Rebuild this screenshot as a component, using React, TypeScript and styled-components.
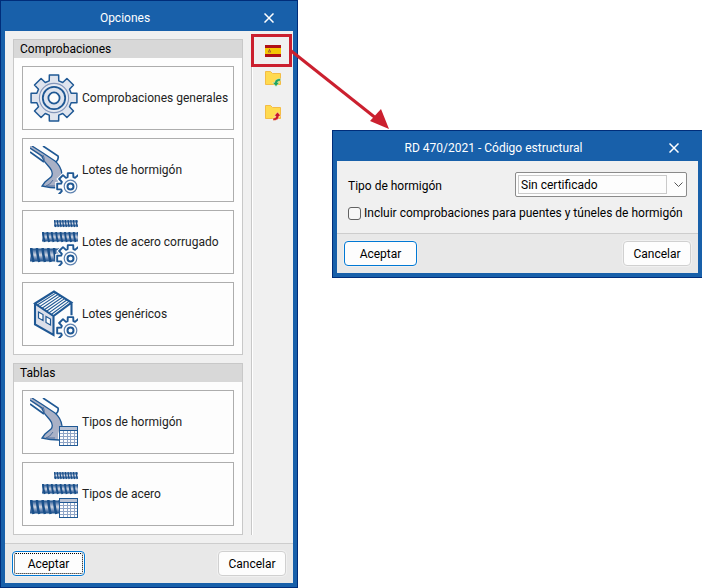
import React from "react";
import styled, { createGlobalStyle } from "styled-components";

const GlobalStyle = createGlobalStyle`
  *, *::before, *::after { box-sizing: border-box; }
  body { margin: 0; background: #fff; }
  body, button, select, input {
    font-family: Roboto, "Noto Sans", sans-serif;
    font-size: 12px;
    line-height: 16px;
    color: #000;
  }
`;

const Desktop = styled.main`
  display: grid;
  grid-template-columns: 298fr 370fr;
  column-gap: 34px;
  align-items: start;
`;

const Window = styled.section<{ $offset?: number; $flush?: boolean }>`
  min-width: 0;
  margin-top: ${(p) => p.$offset ?? 0}px;
  padding: 0 4px 4px;
  background: #1860aa;
  border: 1px solid #002d7a;
  border-right-width: ${(p) => (p.$flush ? 0 : 1)}px;
`;

const TitleBar = styled.header`
  display: flex;
  align-items: center;
  height: 30px;
  padding-top: 4px;
`;

const Title = styled.h1`
  flex: 1;
  margin: 0;
  font-size: 12px;
  font-weight: 400;
  text-align: center;
  color: #fff;
`;

const CloseButton = styled.button`
  display: grid;
  place-items: center;
  width: 48px;
  height: 26px;
  padding: 0;
  border: 0;
  background: none;
`;

const OptionsBody = styled.div`
  display: flex;
  gap: 8px;
  padding: 8px 0 8px 8px;
  background: #f0f0f0;
`;

const Groups = styled.div`
  flex: 1;
  min-width: 0;
  display: flex;
  flex-direction: column;
  gap: 8px;
`;

const GroupBox = styled.section`
  border: 1px solid #c8c8c8;
  background: #fdfdfd;
`;

const GroupTitle = styled.h2`
  margin: 0;
  padding: 1px 6px;
  font-size: 12px;
  font-weight: 400;
  background: #d8d8d8;
`;

const OptionList = styled.div`
  display: grid;
  grid-template-columns: minmax(0, 1fr);
  gap: 8px;
  padding: 8px;
`;

const OptionButton = styled.button`
  display: flex;
  align-items: center;
  gap: 4px;
  height: 64px;
  padding: 0 0 0 7px;
  border: 1px solid #adadad;
  background: #fdfdfd;
  color: #222;
  text-align: left;
  white-space: nowrap;

  svg { flex: none; }
`;

const Toolbar = styled.div`
  display: flex;
  flex-direction: column;
  align-items: stretch;
  width: 42px;
  border-left: 1px solid #c8c8c8;
  box-shadow: inset 1px 0 #fff;
`;

const ToolSeparator = styled.hr`
  align-self: stretch;
  height: 1px;
  margin: 1px 4px 2px 1px;
  border: 0;
  background: #d4d4d4;
`;

const ToolButton = styled.button<{ $gap?: number }>`
  position: relative;
  display: grid;
  place-items: center;
  height: 24px;
  margin-top: ${(p) => p.$gap ?? 0}px;
  padding: 0;
  border: 0;
  background: none;
`;

const Callout = styled.span`
  position: absolute;
  top: -5px;
  left: -1px;
  right: 1px;
  height: 33px;
  border: 3px solid #cb202f;
  pointer-events: none;
`;

const CalloutArrow = styled.svg`
  position: absolute;
  top: 10px;
  left: 36px;
  z-index: 2;
  overflow: visible;
`;

const Footer = styled.footer`
  display: flex;
  justify-content: space-between;
  padding: 7px;
  border-top: 1px solid #cdcdcd;
  background: #e8e8e8;
`;

const DialogButton = styled.button<{ $primary?: boolean; $focused?: boolean }>`
  min-width: ${(p) => (p.$primary ? 73 : 68)}px;
  height: 25px;
  padding: 0 4px;
  border: 1px solid ${(p) => (p.$primary ? "#0078d4" : "#d0d0d0")};
  border-radius: 4px;
  background: #fdfdfd;
  box-shadow: 0 0 0 1px #f0f0f0;
  outline: ${(p) => (p.$focused ? "1px dotted #000" : "none")};
  outline-offset: -3px;
`;

const Form = styled.form`
  display: grid;
  gap: 8px;
  padding: 11px 11px 12px;
  background: #f0f0f0;
`;

const FieldRow = styled.div`
  display: flex;
  align-items: center;
  justify-content: space-between;

  label { padding-top: 2px; }
`;

const SelectFrame = styled.div`
  display: grid;
  grid-template-columns: 1fr 16px;
  align-items: center;
  width: 172px;
  height: 25px;
  padding: 2px 0 2px 2px;
  border: 1px solid #8a8a8a;
  border-radius: 2px;
  background: #fdfdfd;

  svg {
    grid-area: 1 / 2;
    justify-self: center;
    pointer-events: none;
  }
  &::before {
    content: "";
    grid-area: 1 / 1;
    height: 19px;
    margin-right: 3px;
    border: 1px solid #cacaca;
  }
`;

const Select = styled.select`
  grid-area: 1 / 1 / 2 / 3;
  height: 19px;
  padding: 0 18px 0 3px;
  border: 0;
  appearance: none;
  background: transparent;
`;

const CheckRow = styled.label`
  display: flex;
  align-items: center;
  gap: 3px;
  white-space: nowrap;
`;

const CheckBox = styled.input`
  appearance: none;
  flex: none;
  width: 13px;
  height: 13px;
  margin: 0;
  border: 1px solid #626262;
  border-radius: 3px;
  background: #f7f7f7;
  &:checked { background: #0067c0; }
`;

const BLUE = "#1f5894";

function gearPath(cx: number, cy: number, outer: number, inner: number, tip: number, root: number) {
  const points: string[] = [];
  for (let i = 0; i < 8; i++) {
    const centre = (i * Math.PI) / 4;
    for (const [r, a] of [[inner, -root], [outer, -tip], [outer, tip], [inner, root]]) {
      points.push(`${(cx + r * Math.cos(centre + a)).toFixed(2)} ${(cy + r * Math.sin(centre + a)).toFixed(2)}`);
    }
  }
  return `M${points.join("L")}Z`;
}

const BigGear = () => (
  <>
    <path d={gearPath(24, 24, 23.4, 17.8, 0.2, 0.27)} fill="#dfe4ee" stroke={BLUE} strokeWidth="1.5" strokeLinejoin="round" />
    <circle cx="24" cy="24" r="14.6" fill="#e6eaf2" stroke="#8496ba" strokeWidth="1.1" />
    <circle cx="24" cy="24" r="11.2" fill="#dfe4ee" stroke={BLUE} strokeWidth="1.8" />
    <circle cx="24" cy="24" r="5.6" fill="#fdfdfd" stroke={BLUE} strokeWidth="1.8" />
  </>
);

const SmallGear = () => (
  <>
    <path d={gearPath(40.5, 40.5, 13.6, 9.8, 0.2, 0.3)} fill="#fdfdfd" stroke="#fdfdfd" strokeWidth="4" />
    <path d={gearPath(40.5, 40.5, 13.6, 9.8, 0.2, 0.3)} fill="#fdfdfd" stroke={BLUE} strokeWidth="1.9" strokeLinejoin="round" />
    <circle cx="40.5" cy="40.5" r="6.3" fill="none" stroke="#5d82b0" strokeWidth="1.2" />
    <circle cx="40.5" cy="40.5" r="3" fill="#fdfdfd" stroke={BLUE} strokeWidth="2" />
  </>
);

const SmallTable = () => (
  <>
    <rect x="29.5" y="28.5" width="18" height="19" fill="#fdfdfd" stroke={BLUE} />
    <rect x="30" y="29" width="17" height="3" fill="#b9c2d4" />
    <path d="M30 32.5H47" stroke={BLUE} />
    <path d="M33.5 33V47M37.5 33V47M40.5 33V47M44.5 33V47M30 35.5H47M30 38.5H47M30 41.5H47M30 44.5H47" stroke="#8ea4c6" />
  </>
);

const Chute = () => (
  <>
    <path
      d="M0 0L3 0L13 7L25 15Q31 20 32 27Q29 31 28 36L28 42Q20 42 12 40L15 36L21 31Q24 28 21 24L14 15L9 9L0 3Z"
      fill="#a9b1c6"
    />
    <path d="M2 0L13 7L25 15Q31 20 32 28" fill="none" stroke={BLUE} strokeWidth="1.3" />
    <path d="M0 2L12 10L14 15L20 22Q24 27 21 31L15 36L12 40Q20 42 29 42" fill="none" stroke={BLUE} strokeWidth="1.3" />
    <path d="M13 9Q15 12 14 16M23 34Q20 39 16 40L25 40" fill="none" stroke="#53719f" />
    <path d="M0 6L14 16M13 0L28 10Q29 13 26 16" fill="none" stroke={BLUE} strokeWidth="1.7" />
  </>
);

const bars = [
  { x: 24, y: 2, h: 7, step: 2.7, rib: 1.2 },
  { x: 12, y: 14, h: 10, step: 4.4, rib: 1.9 },
  { x: 0, y: 30, h: 14, step: 5.7, rib: 2.5 },
];

const Rebar = () => (
  <>
    <defs>
      <linearGradient id="steel" x2="0" y2="1">
        <stop offset="0" stopColor="#194f8a" />
        <stop offset=".2" stopColor="#6485b1" />
        <stop offset=".5" stopColor="#d3d8e3" />
        <stop offset=".8" stopColor="#5579aa" />
        <stop offset="1" stopColor="#194f8a" />
      </linearGradient>
    </defs>
    {bars.map((b) => (
      <g key={b.y}>
        <rect x={b.x} y={b.y + 0.5} width={48 - b.x} height={b.h - 1} fill="url(#steel)" />
        {Array.from({ length: Math.ceil((48 - b.x) / b.step) }, (_, i) => {
          const x = b.x + b.rib / 2 + i * b.step;
          return (
            <path
              key={i}
              d={`M${x} ${b.y}Q${x + b.step * 0.1} ${b.y + b.h * 0.6} ${x + b.step * 0.4} ${b.y + b.h}`}
              fill="none"
              stroke="#194f8a"
              strokeWidth={b.rib}
            />
          );
        })}
      </g>
    ))}
  </>
);

const House = () => (
  <>
    <path d="M5 13.5L23.5 26V45L5 34.5Z" fill="#dcdfe9" />
    <path d="M23.5 26L41.5 12.5V35L23.5 45Z" fill="#fdfdfd" />
    <path d="M5 13.5L24 1.5L41.5 12.5L23.5 26Z" fill="#fdfdfd" />
    {[1, 2, 3, 4, 5, 6, 7].map((i) => (
      <path
        key={i}
        d={`M${5 + (18.5 * i) / 8} ${13.5 + (12.5 * i) / 8}L${24 + (17.5 * i) / 8} ${1.5 + (11 * i) / 8}`}
        stroke={BLUE}
        strokeWidth="1.1"
      />
    ))}
    <path d="M5 13.5L24 1.5L41.5 12.5L23.5 26ZM5 13.5V34.5L23.5 45V26M41.5 12.5V27" fill="none" stroke={BLUE} strokeWidth="2.1" />
    <path d="M8.5 22L13 24.5V30.5L8.5 28ZM16 26.5L20.5 29V35L16 32.5Z" fill="#fdfdfd" stroke={BLUE} strokeWidth="1.2" />
  </>
);

const Art = ({ children }: { children: React.ReactNode }) => (
  <svg width="48" height="48" viewBox="0 0 48 48" aria-hidden="true">
    {children}
  </svg>
);

const Cross = () => (
  <svg width="10" height="10" viewBox="0 0 10 10" aria-hidden="true">
    <path d="M.5 .5L9.500 9.500M9.500 .5L.5 9.500" stroke="#fff" strokeWidth="1.5" />
  </svg>
);

const Flag = () => (
  <svg width="16" height="12" viewBox="0 0 16 12" aria-hidden="true">
    <path d="M0 0H16V12H0Z" fill="#b01116" />
    <path d="M0 3H16V9H0Z" fill="#f3c806" />
    <path d="M3 5H6V8H3Z" fill="#cf9424" />
    <path d="M4 4H5V6H4ZM3 6H4V7H3ZM5 6H6V7H5Z" fill="#b5651f" />
  </svg>
);

const Folder = ({ out = false }: { out?: boolean }) => (
  <svg width="16" height="16" viewBox="0 0 16 16" aria-hidden="true">
    <path d="M.5 .5H5.5L7.5 2.5H15.5V13.5H.5Z" fill="#ffda4f" stroke="#f4bc45" />
    {out ? (
      <path d="M12.500 7L16 11H14Q14 15.500 8 15.500V13Q11 13.500 11 11H9Z" fill="#c9152b" stroke="#fff3c4" strokeWidth=".5" />
    ) : (
      <path d="M15.500 7.500Q10 7.500 9.500 11.500H7.500L11 15.500L14.500 11.500H12.500Q12.500 10 15.500 10Z" fill="#1fa463" stroke="#fff3c4" strokeWidth=".5" />
    )}
  </svg>
);

const groups = [
  {
    title: "Comprobaciones",
    options: [
      { label: "Comprobaciones generales", art: <BigGear /> },
      { label: "Lotes de hormigón", art: <><Chute /><SmallGear /></> },
      { label: "Lotes de acero corrugado", art: <><Rebar /><SmallGear /></> },
      { label: "Lotes genéricos", art: <><House /><SmallGear /></> },
    ],
  },
  {
    title: "Tablas",
    options: [
      { label: "Tipos de hormigón", art: <><Chute /><SmallTable /></> },
      { label: "Tipos de acero", art: <><Rebar /><SmallTable /></> },
    ],
  },
];

const WindowTitle = ({ children }: { children: React.ReactNode }) => (
  <TitleBar>
    <Title>{children}</Title>
    <CloseButton type="button" aria-label="Cerrar">
      <Cross />
    </CloseButton>
  </TitleBar>
);

export default function App() {
  return (
    <>
      <GlobalStyle />
      <Desktop>
        <Window>
          <WindowTitle>Opciones</WindowTitle>
          <OptionsBody>
            <Groups>
              {groups.map((group) => (
                <GroupBox key={group.title}>
                  <GroupTitle>{group.title}</GroupTitle>
                  <OptionList>
                    {group.options.map((option) => (
                      <OptionButton key={option.label} type="button">
                        <Art>{option.art}</Art>
                        {option.label}
                      </OptionButton>
                    ))}
                  </OptionList>
                </GroupBox>
              ))}
            </Groups>
            <Toolbar>
              <ToolButton type="button" aria-label="Código estructural">
                <Flag />
                <Callout>
                  <CalloutArrow width="100" height="82" viewBox="0 0 100 82" aria-hidden="true">
                    <path d="M0 3L87 72" stroke="#cb202f" strokeWidth="3" />
                    <path d="M99 82L80 74L91 62Z" fill="#cb202f" />
                  </CalloutArrow>
                </Callout>
              </ToolButton>
              <ToolSeparator />
              <ToolButton type="button" aria-label="Importar">
                <Folder />
              </ToolButton>
              <ToolButton type="button" aria-label="Exportar" $gap={10}>
                <Folder out />
              </ToolButton>
            </Toolbar>
          </OptionsBody>
          <Footer>
            <DialogButton type="button" $primary $focused>Aceptar</DialogButton>
            <DialogButton type="button">Cancelar</DialogButton>
          </Footer>
        </Window>

        <Window $offset={130} $flush>
          <WindowTitle>RD 470/2021 - Código estructural</WindowTitle>
          <Form>
            <FieldRow>
              <label htmlFor="concrete">Tipo de hormigón</label>
              <SelectFrame>
                <Select id="concrete" defaultValue="Sin certificado">
                  <option>Sin certificado</option>
                </Select>
                <svg width="9" height="6" viewBox="0 0 9 6" aria-hidden="true">
                  <path d="M.5 .5L4.500 4.500L8.500 .5" fill="none" stroke="#555" />
                </svg>
              </SelectFrame>
            </FieldRow>
            <CheckRow>
              <CheckBox type="checkbox" />
              Incluir comprobaciones para puentes y túneles de hormigón
            </CheckRow>
          </Form>
          <Footer>
            <DialogButton type="button" $primary>Aceptar</DialogButton>
            <DialogButton type="button">Cancelar</DialogButton>
          </Footer>
        </Window>
      </Desktop>
    </>
  );
}
